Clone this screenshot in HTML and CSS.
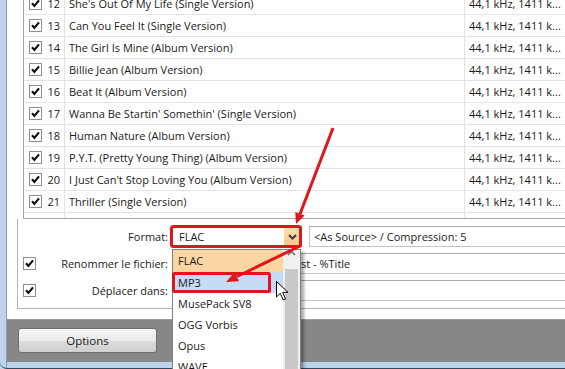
FILE: index.html
```html
<!DOCTYPE html>
<html>
<head>
<meta charset="utf-8">
<link rel="stylesheet" href="styles.css">
</head>
<body>
<div class="window">
  <div class="frame-left"></div>
  <div class="client">
    <div class="content">
      <div class="panel">
        <div class="list">
          <div class="row"><div class="c-num"><svg class="cb" viewBox="0 0 13 13"><rect x="0.5" y="0.5" width="12" height="12" fill="#fff" stroke="#8f8f8f"/><path d="M3 6.3l2.4 2.6L10 3.4" fill="none" stroke="#111" stroke-width="2.2"/></svg><span>12</span></div><div class="c-title">She's Out Of My Life (Single Version)</div><div class="c-info">44,1 kHz, 1411 k...</div></div>
          <div class="row"><div class="c-num"><svg class="cb" viewBox="0 0 13 13"><rect x="0.5" y="0.5" width="12" height="12" fill="#fff" stroke="#8f8f8f"/><path d="M3 6.3l2.4 2.6L10 3.4" fill="none" stroke="#111" stroke-width="2.2"/></svg><span>13</span></div><div class="c-title">Can You Feel It (Single Version)</div><div class="c-info">44,1 kHz, 1411 k...</div></div>
          <div class="row"><div class="c-num"><svg class="cb" viewBox="0 0 13 13"><rect x="0.5" y="0.5" width="12" height="12" fill="#fff" stroke="#8f8f8f"/><path d="M3 6.3l2.4 2.6L10 3.4" fill="none" stroke="#111" stroke-width="2.2"/></svg><span>14</span></div><div class="c-title">The Girl Is Mine (Album Version)</div><div class="c-info">44,1 kHz, 1411 k...</div></div>
          <div class="row"><div class="c-num"><svg class="cb" viewBox="0 0 13 13"><rect x="0.5" y="0.5" width="12" height="12" fill="#fff" stroke="#8f8f8f"/><path d="M3 6.3l2.4 2.6L10 3.4" fill="none" stroke="#111" stroke-width="2.2"/></svg><span>15</span></div><div class="c-title">Billie Jean (Album Version)</div><div class="c-info">44,1 kHz, 1411 k...</div></div>
          <div class="row"><div class="c-num"><svg class="cb" viewBox="0 0 13 13"><rect x="0.5" y="0.5" width="12" height="12" fill="#fff" stroke="#8f8f8f"/><path d="M3 6.3l2.4 2.6L10 3.4" fill="none" stroke="#111" stroke-width="2.2"/></svg><span>16</span></div><div class="c-title">Beat It (Album Version)</div><div class="c-info">44,1 kHz, 1411 k...</div></div>
          <div class="row"><div class="c-num"><svg class="cb" viewBox="0 0 13 13"><rect x="0.5" y="0.5" width="12" height="12" fill="#fff" stroke="#8f8f8f"/><path d="M3 6.3l2.4 2.6L10 3.4" fill="none" stroke="#111" stroke-width="2.2"/></svg><span>17</span></div><div class="c-title">Wanna Be Startin' Somethin' (Single Version)</div><div class="c-info">44,1 kHz, 1411 k...</div></div>
          <div class="row"><div class="c-num"><svg class="cb" viewBox="0 0 13 13"><rect x="0.5" y="0.5" width="12" height="12" fill="#fff" stroke="#8f8f8f"/><path d="M3 6.3l2.4 2.6L10 3.4" fill="none" stroke="#111" stroke-width="2.2"/></svg><span>18</span></div><div class="c-title">Human Nature (Album Version)</div><div class="c-info">44,1 kHz, 1411 k...</div></div>
          <div class="row"><div class="c-num"><svg class="cb" viewBox="0 0 13 13"><rect x="0.5" y="0.5" width="12" height="12" fill="#fff" stroke="#8f8f8f"/><path d="M3 6.3l2.4 2.6L10 3.4" fill="none" stroke="#111" stroke-width="2.2"/></svg><span>19</span></div><div class="c-title">P.Y.T. (Pretty Young Thing) (Album Version)</div><div class="c-info">44,1 kHz, 1411 k...</div></div>
          <div class="row"><div class="c-num"><svg class="cb" viewBox="0 0 13 13"><rect x="0.5" y="0.5" width="12" height="12" fill="#fff" stroke="#8f8f8f"/><path d="M3 6.3l2.4 2.6L10 3.4" fill="none" stroke="#111" stroke-width="2.2"/></svg><span>20</span></div><div class="c-title">I Just Can't Stop Loving You (Album Version)</div><div class="c-info">44,1 kHz, 1411 k...</div></div>
          <div class="row"><div class="c-num"><svg class="cb" viewBox="0 0 13 13"><rect x="0.5" y="0.5" width="12" height="12" fill="#fff" stroke="#8f8f8f"/><path d="M3 6.3l2.4 2.6L10 3.4" fill="none" stroke="#111" stroke-width="2.2"/></svg><span>21</span></div><div class="c-title">Thriller (Single Version)</div><div class="c-info">44,1 kHz, 1411 k...</div></div>
          <div class="row"><div class="c-num"></div><div class="c-title"></div><div class="c-info"></div></div>
        </div>

        <div class="lower">
          <div class="opts">
            <div class="opt-row">
              <span class="opt-chk"></span>
              <span class="opt-label">Format:</span>
              <div class="combo"><span class="combo-text">FLAC</span><span class="combo-btn"><svg width="9" height="6" viewBox="0 0 9 6"><path d="M1 1l3.5 3.5L8 1" fill="none" stroke="#3a3a3a" stroke-width="2"/></svg></span></div>
              <div class="field field-fmt">&lt;As Source&gt; / Compression: 5</div>
            </div>
            <div class="opt-row">
              <svg class="cb opt-chk" viewBox="0 0 13 13"><rect x="0.5" y="0.5" width="12" height="12" fill="#fff" stroke="#8f8f8f"/><path d="M3 6.3l2.4 2.6L10 3.4" fill="none" stroke="#111" stroke-width="2.2"/></svg>
              <span class="opt-label">Renommer le fichier:</span>
              <div class="field field-wide field-name">%Track - %Album - %Artist - %Title</div>
            </div>
            <div class="opt-row">
              <svg class="cb opt-chk" viewBox="0 0 13 13"><rect x="0.5" y="0.5" width="12" height="12" fill="#fff" stroke="#8f8f8f"/><path d="M3 6.3l2.4 2.6L10 3.4" fill="none" stroke="#111" stroke-width="2.2"/></svg>
              <span class="opt-label">Déplacer dans:</span>
              <div class="field field-wide"></div>
            </div>
          </div>
        </div>
      </div>
    </div>
    <div class="footer">
      <button class="btn">Options</button>
    </div>
    <div class="frame-bottom"></div>
  </div>
</div>

<div class="dropdown">
  <div class="dd-items">
    <div class="dd-item dd-hot">FLAC</div>
    <div class="dd-item dd-sel">MP3</div>
    <div class="dd-item">MusePack SV8</div>
    <div class="dd-item">OGG Vorbis</div>
    <div class="dd-item">Opus</div>
    <div class="dd-item">WAVE</div>
  </div>
  <div class="dd-scroll">
    <div class="dd-up"><svg width="9" height="6" viewBox="0 0 9 6"><path d="M1 5l3.5-3.5L8 5" fill="none" stroke="#606060" stroke-width="1.4"/></svg></div>
    <div class="dd-track"><div class="dd-thumb"></div></div>
  </div>
</div>

<svg class="annot" width="565" height="369" viewBox="0 0 565 369">
  <rect x="171.5" y="226.5" width="129" height="20" rx="2" fill="none" stroke="#e0161c" stroke-width="3"/>
  <rect x="173.5" y="273.5" width="96" height="18" rx="1" fill="none" stroke="#e0161c" stroke-width="3"/>
  <line x1="333" y1="128" x2="300" y2="214" stroke="#e0161c" stroke-width="3"/>
  <polygon points="296,224 304.6,215.5 295.3,211.9" fill="#e0161c"/>
  <line x1="300" y1="246" x2="237" y2="276.5" stroke="#e0161c" stroke-width="3"/>
  <polygon points="226,282 239,281.3 234.6,272.2" fill="#e0161c"/>
  <polygon points="276.5,281.5 276.5,297 280.3,293.3 283.3,300 285.6,299 282.7,292.3 288,292.3" fill="#fff" stroke="#000" stroke-width="1" stroke-linejoin="round"/>
</svg>
</body>
</html>
```
FILE: styles.css
```css
* { box-sizing: border-box; }
html, body { margin: 0; padding: 0; }
body {
  width: 565px;
  height: 369px;
  overflow: hidden;
  position: relative;
  font-family: "Open Sans", "Noto Sans", sans-serif;
  font-size: 11px;
  color: #1a1a1a;
  background: #bdd4ec;
}
.window {
  display: flex;
  height: 369px;
  background: #bdd4ec;
  border-bottom: 1px solid #34475c;
  border-bottom-left-radius: 7px;
  overflow: hidden;
}
.frame-left {
  width: 7px;
  flex: none;
  border-right: 1px solid #8b9bb0;
}
.client {
  flex: 1;
  display: flex;
  flex-direction: column;
  min-width: 0;
}
.content {
  height: 320px;
  flex: none;
  background: #fff;
  border-bottom: 1px solid #9c9c9c;
  padding-left: 10px;
}
.panel {
  height: 309px;
  display: flex;
  flex-direction: column;
}
.list {
  margin: -8px -30px 0 6px;
  height: 227px;
  border: 1px solid #a4a4a4;
  overflow: hidden;
  flex: none;
}
.row {
  display: flex;
  height: 22px;
  line-height: 21px;
  border-bottom: 1px solid #e3e3e3;
  white-space: nowrap;
}
.c-num {
  width: 41px;
  flex: none;
  border-right: 1px solid #e3e3e3;
  display: flex;
  align-items: center;
  justify-content: space-between;
  padding: 0 4px 0 5px;
}
.cb { width: 13px; height: 13px; display: block; flex: none; }
.c-title {
  width: 400px;
  flex: none;
  border-right: 1px solid #e3e3e3;
  padding-left: 4px;
}
.c-info { padding-left: 4px; }

.lower {
  flex: 1;
  border-left: 1px solid #b4b4b4;
  border-bottom: 1px solid #b4b4b4;
  padding-left: 5px;
}
.opts {
  margin-top: 7px;
  display: flex;
  flex-direction: column;
  gap: 6px;
  margin-right: -30px;
}
.opt-row {
  display: flex;
  align-items: center;
  height: 21px;
}
.opt-chk { width: 13px; height: 13px; flex: none; }
.opt-label {
  width: 132px;
  flex: none;
  text-align: right;
  white-space: nowrap;
}
.combo {
  margin-left: 4px;
  width: 130px;
  height: 21px;
  flex: none;
  display: flex;
  align-items: center;
  border: 1px solid #9a9a9a;
  background: #fff;
}
.combo-text { flex: 1; padding-left: 6px; }
.combo-btn {
  width: 17px;
  height: 19px;
  display: flex;
  align-items: center;
  justify-content: center;
  background: linear-gradient(#fde0b0, #f8c988);
}
.field {
  height: 21px;
  line-height: 19px;
  border: 1px solid #c4c4c4;
  border-top-color: #a9a9a9;
  padding-left: 4px;
  white-space: nowrap;
  overflow: hidden;
  background: #fff;
}
.field-fmt { margin-left: 7px; flex: 1; }
.field-wide { margin-left: 4px; flex: 1; }
.field-name { text-indent: -1px; }

.footer {
  height: 42px;
  flex: none;
  background: #878787;
  padding: 8px 0 0 11px;
}
.btn {
  width: 139px;
  height: 25px;
  border: 1px solid #6f6f6f;
  border-radius: 3px;
  background: linear-gradient(#f4f4f4 0%, #ebebeb 50%, #dcdcdc 51%, #d0d0d0 100%);
  font-family: "Open Sans", "Noto Sans", sans-serif;
  font-size: 11.5px;
  color: #1a1a1a;
  padding: 0;
}
.frame-bottom { flex: 1; }

.dropdown {
  position: absolute;
  left: 172px;
  top: 249px;
  width: 129px;
  height: 140px;
  border: 1px solid #828282;
  background: #fff;
  box-shadow: 3px 3px 3px rgba(0, 0, 0, 0.35);
  display: flex;
}
.dd-items { flex: 1; }
.dd-item {
  height: 21px;
  line-height: 21px;
  padding-left: 5px;
  white-space: nowrap;
}
.dd-item.dd-hot { height: 22px; line-height: 22px; background: #fcd6a2; }
.dd-item.dd-sel { background: #c6dcf4; }
.dd-scroll {
  width: 17px;
  flex: none;
  background: #f0f0f0;
  display: flex;
  flex-direction: column;
}
.dd-up {
  height: 17px;
  display: flex;
  align-items: center;
  justify-content: center;
}
.dd-track { flex: 1; padding-top: 13px; }
.dd-thumb {
  height: 120px;
  margin: 0 2px;
  background: #c9c9c9;
}
.annot {
  position: absolute;
  left: 0;
  top: 0;
  pointer-events: none;
}
```
